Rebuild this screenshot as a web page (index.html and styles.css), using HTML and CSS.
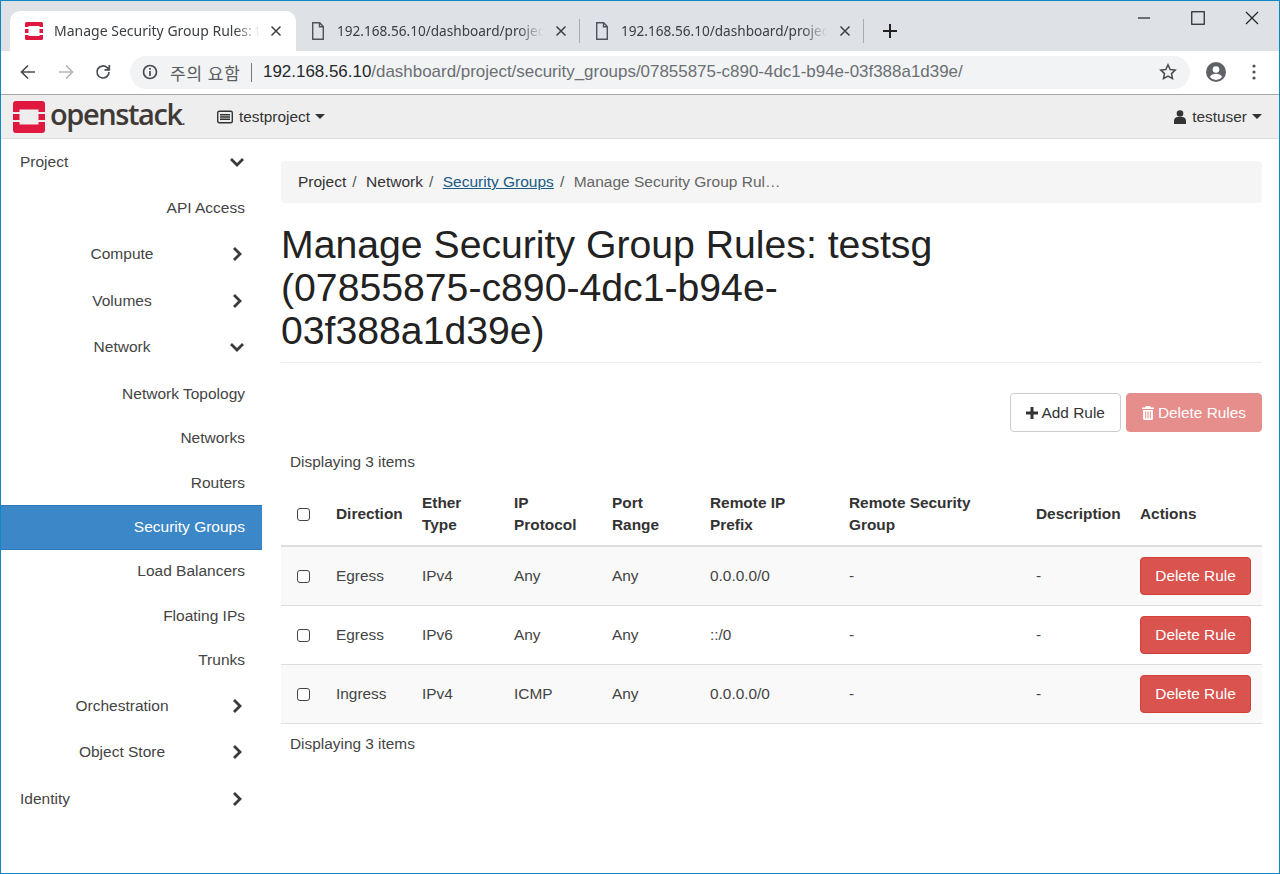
FILE: index.html
```html
<!DOCTYPE html>
<html lang="en">
<head>
<meta charset="utf-8">
<title>Manage Security Group Rules</title>
<link rel="stylesheet" href="styles.css">
</head>
<body>
<div class="window">
  <div class="tabstrip">
    <div class="tab tab-active">
      <svg class="tab-icon" viewBox="0 0 20 20"><path fill="#e0173f" d="M2.500 1h15A1.500 1.500 0 0 1 19 2.500V6h-3.500V5h-11v1H1V2.500A1.500 1.500 0 0 1 2.500 1zM1 8h3.500v4H1zM15.500 8H19v4h-3.500zM1 14h3.500v1h11v-1H19v3.500a1.500 1.500 0 0 1-1.500 1.500h-15A1.500 1.500 0 0 1 1 17.500z"/></svg>
      <span class="tab-title">Manage Security Group Rules: testsg</span>
      <svg class="tab-close" viewBox="0 0 12 12"><path d="M1.500 1.500l9 9M10.500 1.500l-9 9"/></svg>
    </div>
    <div class="tab">
      <svg class="tab-icon" viewBox="0 0 16 20"><path fill="none" stroke="#50545a" stroke-width="1.400" d="M2.700 1.700h7l3.600 3.800v12.800H2.700zM9.500 1.700v4h3.800"/></svg>
      <span class="tab-title">192.168.56.10/dashboard/project/security_groups</span>
      <svg class="tab-close" viewBox="0 0 12 12"><path d="M1.500 1.500l9 9M10.500 1.500l-9 9"/></svg>
    </div>
    <i class="tab-sep"></i>
    <div class="tab">
      <svg class="tab-icon" viewBox="0 0 16 20"><path fill="none" stroke="#50545a" stroke-width="1.400" d="M2.700 1.700h7l3.600 3.800v12.800H2.700zM9.500 1.700v4h3.800"/></svg>
      <span class="tab-title">192.168.56.10/dashboard/project/security_groups</span>
      <svg class="tab-close" viewBox="0 0 12 12"><path d="M1.500 1.500l9 9M10.500 1.500l-9 9"/></svg>
    </div>
    <i class="tab-sep"></i>
    <svg class="new-tab" viewBox="0 0 16 16"><path d="M8 1v14M1 8h14"/></svg>
    <div class="win-controls">
      <svg viewBox="0 0 14 14"><path d="M1 7h12"/></svg>
      <svg viewBox="0 0 14 14"><rect x=".75" y=".75" width="12.500" height="12.500"/></svg>
      <svg viewBox="0 0 14 14"><path d="M1 1l12 12M13 1L1 13"/></svg>
    </div>
  </div>

  <div class="toolbar">
    <svg class="tool" viewBox="0 0 18 18"><path d="M16 9H3M9 2.500L2.500 9l6.500 6.500"/></svg>
    <svg class="tool tool-off" viewBox="0 0 18 18"><path d="M2 9h13M9 2.500L15.500 9 9 15.500"/></svg>
    <svg class="tool" viewBox="0 0 18 18"><path d="M15 9a6 6 0 1 1-1.800-4.300L15 6.500M15.300 2v4.800h-4.800"/></svg>
    <div class="omnibox">
      <svg class="info" viewBox="0 0 16 16"><circle cx="8" cy="8" r="6.500"/><path d="M8 7v5M8 4v1.800"/></svg>
      <span class="warn">주의 요함</span>
      <i class="omni-sep"></i>
      <span class="url"><b>192.168.56.10</b>/dashboard/project/security_groups/07855875-c890-4dc1-b94e-03f388a1d39e/</span>
      <svg class="star" viewBox="0 0 18 18"><path d="M9 1.800l2.200 4.700 5 .6-3.700 3.500 1 5L9 13.100l-4.500 2.500 1-5L1.800 7.100l5-.6z"/></svg>
    </div>
    <svg class="profile" viewBox="0 0 20 20"><circle cx="10" cy="10" r="10" fill="#5f6368"/><circle cx="10" cy="7.500" r="3.300" fill="#fff"/><path fill="#fff" d="M3.800 15c1.200-2.300 3.800-3.200 6.200-3.200s5 .9 6.200 3.200a8 8 0 0 1-12.400 0z"/></svg>
    <svg class="menu" viewBox="0 0 4 16"><circle cx="2" cy="2" r="1.600"/><circle cx="2" cy="8" r="1.600"/><circle cx="2" cy="14" r="1.600"/></svg>
  </div>

  <nav class="navbar">
    <div class="brand">
      <svg class="logo" viewBox="0 0 32 32"><path fill="#e0173f" d="M3 0h26a3 3 0 0 1 3 3v8h-6.500V8.500h-19V11H0V3a3 3 0 0 1 3-3zM0 13h6.500v6H0zM25.500 13H32v6h-6.500zM0 21h6.500v2.500h19V21H32v8a3 3 0 0 1-3 3H3a3 3 0 0 1-3-3z"/></svg>
      <span class="brand-name">openstack<small>.</small></span>
    </div>
    <div class="project-pick">
      <svg class="pick-icon" viewBox="0 0 16 14"><rect x=".7" y="1.200" width="14.600" height="11.600" rx="1.500" fill="none" stroke="#333" stroke-width="1.400"/><path stroke="#333" stroke-width="1.400" d="M3 4.700h10M3 7h10M3 9.300h10"/></svg>
      <span>testproject</span><i class="caret"></i>
    </div>
    <div class="user-pick">
      <svg class="user-icon" viewBox="0 0 12 14"><circle cx="6" cy="3.500" r="3.300" fill="#333"/><path fill="#333" d="M0 14v-3.200C0 8.500 1.800 7 3.500 7h5C10.200 7 12 8.500 12 10.800V14z"/></svg>
      <span>testuser</span><i class="caret"></i>
    </div>
  </nav>

  <div class="page">
    <aside class="sidebar">
      <div class="top-item"><span>Project</span><svg class="chev" viewBox="0 0 16 16"><path d="M2 5l6 6 6-6"/></svg></div>
      <div class="sub-item tall">API Access</div>
      <div class="mid-item"><span>Compute</span><svg class="chev" viewBox="0 0 16 16"><path d="M5 2l6 6-6 6"/></svg></div>
      <div class="mid-item"><span>Volumes</span><svg class="chev" viewBox="0 0 16 16"><path d="M5 2l6 6-6 6"/></svg></div>
      <div class="mid-item mid-open"><span>Network</span><svg class="chev" viewBox="0 0 16 16"><path d="M2 5l6 6 6-6"/></svg></div>
      <div class="sub-item">Network Topology</div>
      <div class="sub-item">Networks</div>
      <div class="sub-item">Routers</div>
      <div class="sub-item sub-active">Security Groups</div>
      <div class="sub-item">Load Balancers</div>
      <div class="sub-item">Floating IPs</div>
      <div class="sub-item">Trunks</div>
      <div class="mid-item"><span>Orchestration</span><svg class="chev" viewBox="0 0 16 16"><path d="M5 2l6 6-6 6"/></svg></div>
      <div class="mid-item"><span>Object Store</span><svg class="chev" viewBox="0 0 16 16"><path d="M5 2l6 6-6 6"/></svg></div>
      <div class="top-item"><span>Identity</span><svg class="chev" viewBox="0 0 16 16"><path d="M5 2l6 6-6 6"/></svg></div>
    </aside>

    <main class="content">
      <ol class="breadcrumb">
        <li>Project</li>
        <li>Network</li>
        <li class="crumb-link">Security Groups</li>
        <li class="crumb-current">Manage Security Group Rul…</li>
      </ol>
      <h1 class="title"><span class="title-text">Manage Security Group Rules: testsg (07855875-c890-4dc1-b94e-03f388a1d39e)</span></h1>
      <div class="actions">
        <button class="btn btn-default"><svg class="btn-icon" viewBox="0 0 12 12"><path d="M4.500 0h3v4.500H12v3H7.500V12h-3V7.500H0v-3h4.500z"/></svg>Add Rule</button>
        <button class="btn btn-danger btn-off"><svg class="btn-icon" viewBox="0 0 12 14"><path d="M4 0h4l1 1.500h3V3H0V1.500h3zM1 4h10v8.500A1.500 1.500 0 0 1 9.500 14h-7A1.500 1.500 0 0 1 1 12.500zM3.200 5.500v7h1v-7zM5.500 5.500v7h1v-7zM7.800 5.500v7h1v-7z" fill-rule="evenodd"/></svg>Delete Rules</button>
      </div>
      <div class="count">Displaying 3 items</div>
      <table class="rules">
        <colgroup>
          <col class="c-check"><col class="c-dir"><col class="c-eth"><col class="c-proto"><col class="c-port"><col class="c-prefix"><col class="c-group"><col class="c-desc"><col class="c-act">
        </colgroup>
        <thead>
          <tr>
            <th><span class="check"></span></th>
            <th>Direction</th><th>Ether Type</th><th>IP<br>Protocol</th><th>Port Range</th><th>Remote IP<br>Prefix</th><th>Remote Security Group</th><th>Description</th><th>Actions</th>
          </tr>
        </thead>
        <tbody>
          <tr>
            <td><span class="check"></span></td><td>Egress</td><td>IPv4</td><td>Any</td><td>Any</td><td>0.0.0.0/0</td><td>-</td><td>-</td>
            <td><button class="btn btn-danger btn-row">Delete Rule</button></td>
          </tr>
          <tr>
            <td><span class="check"></span></td><td>Egress</td><td>IPv6</td><td>Any</td><td>Any</td><td>::/0</td><td>-</td><td>-</td>
            <td><button class="btn btn-danger btn-row">Delete Rule</button></td>
          </tr>
          <tr>
            <td><span class="check"></span></td><td>Ingress</td><td>IPv4</td><td>ICMP</td><td>Any</td><td>0.0.0.0/0</td><td>-</td><td>-</td>
            <td><button class="btn btn-danger btn-row">Delete Rule</button></td>
          </tr>
        </tbody>
      </table>
      <div class="count count-foot">Displaying 3 items</div>
    </main>
  </div>
</div>
</body>
</html>
```
FILE: styles.css
```css
* { box-sizing: border-box; }
html, body { margin: 0; padding: 0; background: #fff; }
body { font-family: "Liberation Sans", Arial, sans-serif; font-size: 15.400px; color: #333; }
.window { width: 1280px; height: 874px; border: 1px solid #1187c4; overflow: hidden; display: flex; flex-direction: column; }

.tabstrip { height: 50px; flex: none; background: #dee1e6; display: flex; align-items: flex-end; padding-left: 9px; position: relative; }
.tab { width: 283px; height: 40px; display: flex; align-items: center; padding: 0 0 0 12px; color: #3c4043; font: 13.600px "Noto Sans", "Open Sans", sans-serif; }
.tab-active { width: 286px; padding-left: 14px; background: #fff; border-radius: 10px 10px 0 0; font-size: 14px; }
.tab-icon { width: 20px; height: 20px; flex: none; margin-right: 9px; }
.tab-active .tab-icon { margin-right: 10px; }
.tab-title { width: 206px; margin-top: -2px; white-space: nowrap; overflow: hidden; -webkit-mask-image: linear-gradient(to right, #000 88%, transparent 100%); mask-image: linear-gradient(to right, #000 88%, transparent 100%); }
.tab-close { width: 12px; height: 12px; flex: none; margin-left: 12px; fill: none; stroke: #3c4043; stroke-width: 1.500; }
.tab-active .tab-close { margin-left: 10px; }
.tab-sep { width: 1px; height: 24px; margin-bottom: 8px; background: #a9acb0; flex: none; }
.new-tab { width: 16px; height: 16px; margin: 0 0 12px 18px; flex: none; fill: none; stroke: #222; stroke-width: 2; }
.win-controls { margin-left: auto; align-self: flex-start; display: flex; gap: 40px; padding: 10px 20px 0 0; }
.win-controls svg { width: 14px; height: 14px; fill: none; stroke: #222; stroke-width: 1.200; }

.toolbar { height: 44px; flex: none; background: #fff; border-bottom: 1px solid #a8a8a8; display: flex; align-items: center; padding: 0 0 1px 18px; }
.tool { width: 18px; height: 18px; flex: none; margin-right: 19.500px; fill: none; stroke: #4a4d51; stroke-width: 1.700; }
.tool-off { stroke: #b4b6b9; }
.omnibox { width: 1060px; height: 33px; margin-left: -1.500px; border-radius: 17px; background: #f1f3f4; display: flex; align-items: center; padding: 0 13px 0 12px; flex: none; }
.info { width: 16px; height: 16px; flex: none; fill: none; stroke: #484b4f; stroke-width: 1.700; }
.warn { margin-left: 12px; width: 72px; color: #5a5d61; font: 17px "Noto Sans CJK KR", sans-serif; letter-spacing: .9px; white-space: nowrap; }
.omni-sep { width: 1px; height: 19px; margin: 0 11px 0 9px; background: #777; flex: none; }
.url { color: #6b6f73; font-size: 16.950px; white-space: nowrap; }
.url b { font-weight: 400; color: #26282b; }
.star { width: 18px; height: 18px; margin-left: auto; flex: none; fill: none; stroke: #47494c; stroke-width: 1.500; }
.profile { width: 20px; height: 20px; margin-left: 16px; flex: none; }
.menu { width: 4px; height: 16px; margin-left: 26px; flex: none; fill: #505357; }

.navbar { height: 44px; flex: none; background: #eeeeee; border-bottom: 1px solid #dcdcdc; display: flex; align-items: center; padding-left: 12px; color: #333; }
.brand { display: flex; align-items: center; width: 204px; flex: none; }
.logo { width: 32px; height: 32px; flex: none; }
.brand-name { margin-left: 5px; font: 600 29px "Open Sans", sans-serif; letter-spacing: -1.400px; color: #3f3a37; line-height: 32px; }
.brand-name small { font-size: 13px; color: #3f3a37; }
.project-pick { display: flex; align-items: center; }
.pick-icon { width: 16px; height: 14px; margin-right: 6px; flex: none; }
.caret { width: 0; height: 0; margin-left: 5px; border-top: 5px solid #333; border-left: 5px solid transparent; border-right: 5px solid transparent; }
.user-pick { margin-left: auto; padding-right: 17px; display: flex; align-items: center; }
.user-icon { width: 12px; height: 14px; margin-right: 6px; flex: none; }

.page { flex: 1; display: flex; min-height: 0; }
.sidebar { width: 261px; flex: none; font-size: 15.500px; margin-top: -.6px; }
.top-item, .mid-item { height: 46.400px; display: flex; align-items: center; padding-right: 16px; color: #444; }
.top-item { padding-left: 19px; }
.top-item span { flex: 1; }
.mid-item { padding-left: 15px; }
.mid-item span { flex: 1; text-align: center; }
.mid-open { margin-bottom: 1.200px; }
.chev { width: 18px; height: 18px; padding: 1px; flex: none; fill: none; stroke: #3a3a3a; stroke-width: 2.800; }
.sub-item { height: 44.500px; display: flex; align-items: center; justify-content: flex-end; padding-right: 17px; color: #444; }
.sub-item.tall { height: 46.400px; }
.sub-active { background: #3c87c7; color: #fff; border-top: 1px solid #2f79b9; border-bottom: 1px solid #2f79b9; margin-bottom: -.500px; }

.content { flex: 1; padding: 22px 17px 0 19px; min-width: 0; }
.breadcrumb { list-style: none; margin: 0; padding: 0 17px; height: 42px; background: #f5f5f5; border-radius: 4px; display: flex; align-items: center; color: #333; font-size: 15.500px; }
.breadcrumb li + li::before { content: "/"; padding: 0 9.500px 0 6px; color: #555; display: inline-block; }
.crumb-link { color: #1a5a86; text-decoration: underline; }
.crumb-current { color: #666; }
.title { margin: 20px 0 0; padding-bottom: 10px; border-bottom: 1px solid #eee; font-size: 39.200px; font-weight: 400; line-height: 43px; color: #222; }
.title-text { display: block; max-width: 700px; }
.actions { margin-top: 30px; display: flex; justify-content: flex-end; gap: 5px; }
.btn { font: 15.400px "Liberation Sans", Arial, sans-serif; height: 39px; padding: 0 15px; border-radius: 4px; border: 1px solid transparent; display: inline-flex; align-items: center; white-space: nowrap; }
.btn-icon { width: 12px; height: 12px; margin-right: 4px; flex: none; fill: currentColor; }
.btn-default { background: #fff; border-color: #ccc; color: #333; }
.btn-danger { background: #d9534f; border-color: #d43f3a; color: #fff; }
.btn-off { background: #e58e8c; border-color: #e58e8c; color: #fff; }
.btn-off .btn-icon { height: 14px; }
.count { padding: 21px 9px 0; line-height: 18px; color: #444; }
.count-foot { padding-top: 11px; }
.rules { width: 981px; margin-top: 9px; border-collapse: collapse; table-layout: fixed; }
.c-check { width: 47px; } .c-dir { width: 86px; } .c-eth { width: 92px; } .c-proto { width: 98px; } .c-port { width: 98px; } .c-prefix { width: 139px; } .c-group { width: 187px; } .c-desc { width: 104px; } .c-act { width: 130px; }
.rules th { text-align: left; vertical-align: middle; font-weight: 700; padding: 2px 8px 0; height: 66px; line-height: 22px; color: #333; border-bottom: 2px solid #ddd; }
.rules td { padding: 0 8px; height: 59px; color: #444; border-bottom: 1px solid #ddd; }
.rules tbody tr:nth-child(odd) { background: #f9f9f9; }
.check { display: block; width: 13px; height: 13px; margin: 2px 0 0 8px; border: 1px solid #444; border-radius: 3px; background: #fff; }
.btn-row { width: 111px; height: 38px; margin-top: 1px; justify-content: center; padding: 0; background: #d9534f; }
```
